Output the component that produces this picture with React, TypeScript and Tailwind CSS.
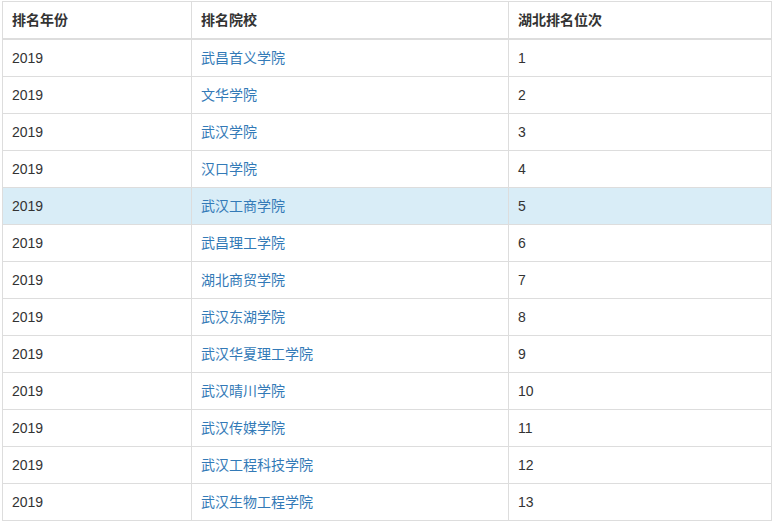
import React from 'react';

const rows: { school: string; rank: number }[] = [
  { school: '武昌首义学院', rank: 1 },
  { school: '文华学院', rank: 2 },
  { school: '武汉学院', rank: 3 },
  { school: '汉口学院', rank: 4 },
  { school: '武汉工商学院', rank: 5 },
  { school: '武昌理工学院', rank: 6 },
  { school: '湖北商贸学院', rank: 7 },
  { school: '武汉东湖学院', rank: 8 },
  { school: '武汉华夏理工学院', rank: 9 },
  { school: '武汉晴川学院', rank: 10 },
  { school: '武汉传媒学院', rank: 11 },
  { school: '武汉工程科技学院', rank: 12 },
  { school: '武汉生物工程学院', rank: 13 },
];

export default function App() {
  return (
    <div
      className="bg-white pl-[2px] pt-[1px] text-[14px] leading-[20px] text-[#333]"
      style={{ fontFamily: '"Liberation Sans", "Noto Sans CJK SC", sans-serif' }}
    >
      <table className="w-[770px] table-fixed border-collapse border border-[#ddd]">
        <colgroup>
          <col className="w-[189px]" />
          <col className="w-[317px]" />
          <col />
        </colgroup>
        <thead>
          <tr>
            <th className="border border-b-2 border-[#ddd] px-[9px] py-[8px] text-left font-bold">排名年份</th>
            <th className="border border-b-2 border-[#ddd] px-[9px] py-[8px] text-left font-bold">排名院校</th>
            <th className="border border-b-2 border-[#ddd] px-[9px] py-[8px] text-left font-bold">湖北排名位次</th>
          </tr>
        </thead>
        <tbody>
          {rows.map((r) => (
            <tr key={r.rank} className={r.rank === 5 ? 'bg-[#d9edf7]' : ''}>
              <td className="border border-[#ddd] px-[9px] py-[8px]">2019</td>
              <td className="border border-[#ddd] px-[9px] py-[8px]">
                <a className="text-[#337ab7]">{r.school}</a>
              </td>
              <td className="border border-[#ddd] px-[9px] py-[8px]">{r.rank}</td>
            </tr>
          ))}
        </tbody>
      </table>
    </div>
  );
}
